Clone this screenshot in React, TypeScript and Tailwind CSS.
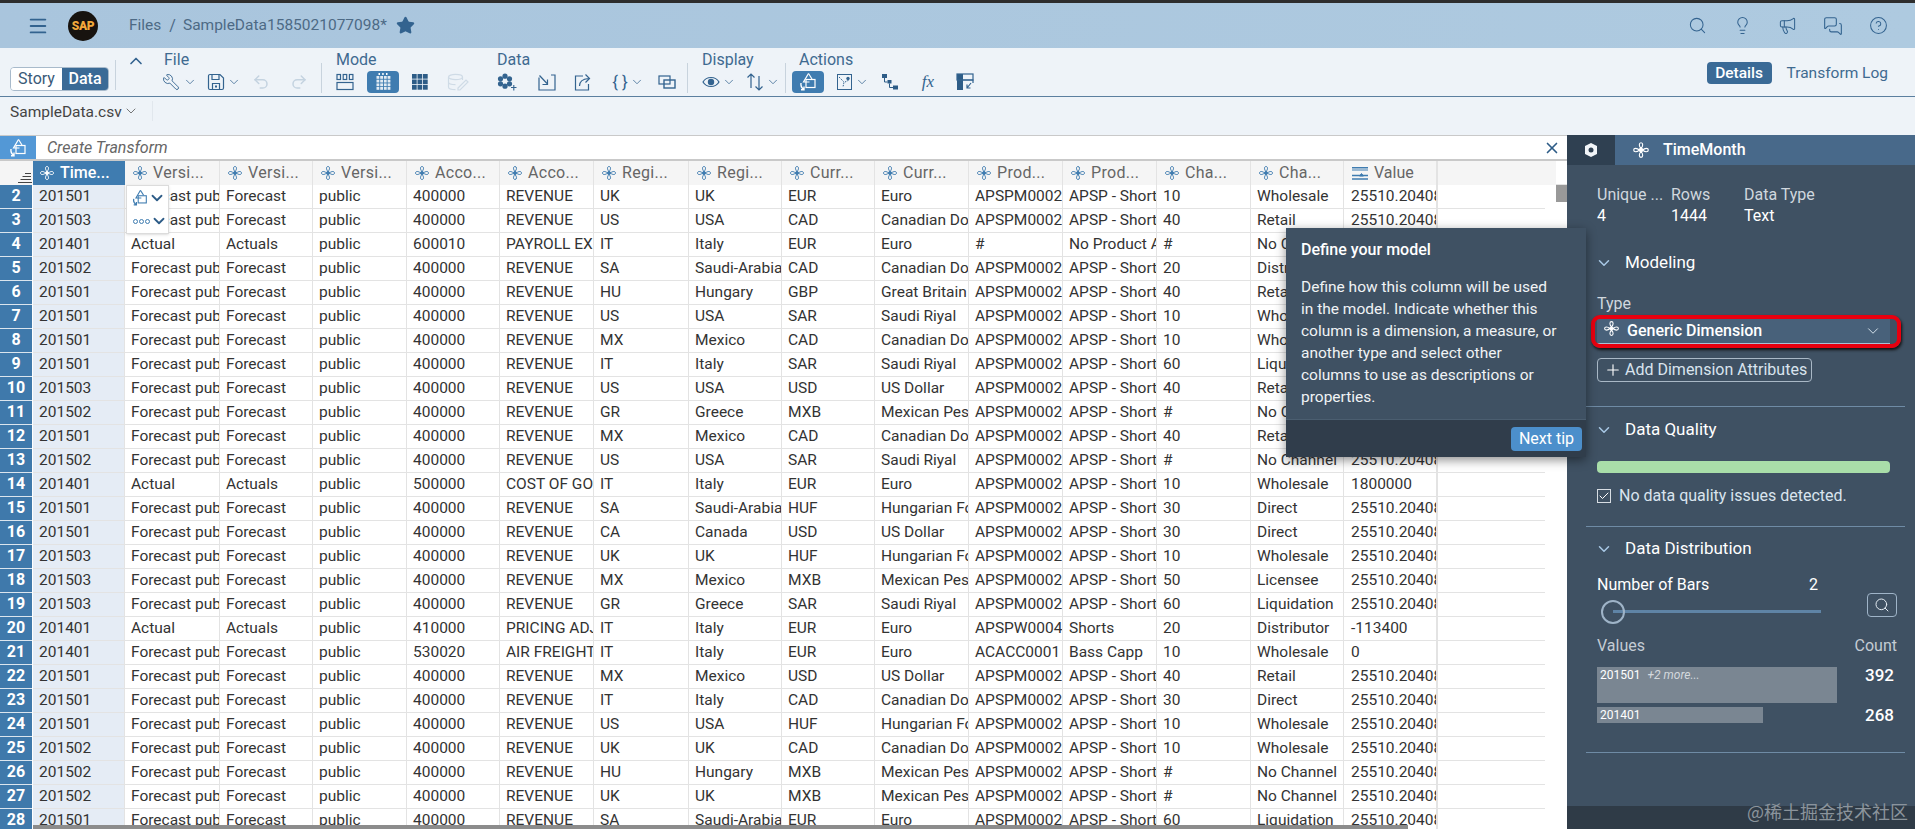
import React from 'react';
import {
  Check,
  ChevronDown,
  ChevronUp,
  CircleHelp,
  Lightbulb,
  Megaphone,
  Menu,
  MessagesSquare,
  Plus,
  Redo2,
  Search,
  Star,
  Undo2,
  Wrench,
  X,
} from 'lucide-react';

const rowGrid =
  'grid grid-cols-[32px_1px_92px_95px_93px_94px_93px_94px_95px_93px_93px_94px_94px_94px_94px_93px_94px_118px]';

const DimIcon = ({ className = '' }: { className?: string }) => (
  <svg viewBox="0 0 16 16" fill="none" stroke="currentColor" strokeWidth="1" className={className}>
    <circle cx="8" cy="8" r="1.5" fill="currentColor" />
    <path d="M8 6.5C6 4.5 6 1.5 8 1.5s2 3 0 5z" />
    <path d="M8 9.5c-2 2-2 5 0 5s2-3 0-5z" />
    <path d="M6.5 8C4.5 6 1.5 6 1.5 8s3 2 5 0z" />
    <path d="M9.500 8c2-2 5-2 5 0s-3 2-5 0z" />
  </svg>
);

const MeasureIcon = ({ className = '' }: { className?: string }) => (
  <svg viewBox="0 0 18 16" fill="none" stroke="currentColor" strokeWidth="1" className={className}>
    <path d="M1 2.500h16M2 3v3M4 3v3M6 3v3M8 3v3M10 3v3M12 3v3M14 3v3M16 3v3" />
    <path d="M1 10.500h16M1 14h16" strokeWidth="1.300" />
    <path d="M10.500 8.500l2 2.500h-4z" fill="currentColor" />
  </svg>
);

const TransformIcon = ({ className = '' }: { className?: string }) => (
  <svg viewBox="0 0 20 20" fill="none" stroke="currentColor" strokeWidth="1.200" className={className}>
    <path d="M10.500 1.500L5.500 10h6" />
    <path d="M10.500 1.500l3.500 5.500" />
    <rect x="8" y="7.500" width="9" height="8" />
    <path d="M3 11c-.5 3 .5 5 3 6.500M6 14.500v3.200H3" strokeWidth="1.400" />
  </svg>
);

const ModeSchema = () => (
  <svg viewBox="0 0 18 18" className="w-[18px] h-[18px]" fill="none" stroke="#33638f" strokeWidth="1.200">
    <rect x="1" y="1.500" width="3.500" height="5" />
    <rect x="7.200" y="1.500" width="3.500" height="5" />
    <rect x="13.400" y="1.500" width="3.500" height="5" />
    <rect x="1" y="9.500" width="16" height="7" />
  </svg>
);

const ModeTable = () => (
  <svg viewBox="0 0 18 18" className="w-[18px] h-[18px]" fill="#fff">
    <path d="M4.500 0h1.500v2h-1.500zM8.200 0h1.500v2h-1.500zM12 0h1.500v2h-1.500z" />
    {[3, 6.700, 10.400, 14].map((y) =>
      [2.500, 6.200, 9.900, 13.600].map((x) => <rect key={`${x}-${y}`} x={x} y={y} width="2.800" height="2.800" opacity="0.85" />),
    )}
  </svg>
);

const ModeGrid = () => (
  <svg viewBox="0 0 18 18" className="w-[18px] h-[18px]" fill="#2d5c87">
    {[1, 6.500, 12].map((y) =>
      [1, 6.500, 12].map((x) => <rect key={`${x}-${y}`} x={x} y={y} width="4.700" height="4.700" />),
    )}
  </svg>
);

const ModeEdit = () => (
  <svg viewBox="0 0 22 18" className="w-[22px] h-[18px]" fill="none" stroke="#cfdbe6" strokeWidth="1.200">
    <ellipse cx="8.500" cy="4" rx="7" ry="2.700" />
    <path d="M1.500 4v10c0 1.500 3 2.700 7 2.700M15.500 4v3M1.500 9c0 1.500 3 2.700 7 2.700" />
    <path d="M11 15l8-8 2 2-8 8h-2z" />
  </svg>
);

const SaveIcon = () => (
  <svg viewBox="0 0 18 18" className="w-[18px] h-[18px]" fill="none" stroke="#33638f" strokeWidth="1.200">
    <path d="M3 1.500h10l3.500 3.500v10a1.500 1.500 0 0 1-1.500 1.500H3A1.500 1.500 0 0 1 1.500 15V3A1.500 1.500 0 0 1 3 1.500z" />
    <path d="M5 1.500v5h7v-5M5.500 16.500v-6h7v6" />
    <rect x="8" y="12.500" width="2" height="2" fill="#33638f" stroke="none" />
  </svg>
);

const AddDimIcon = () => (
  <svg viewBox="0 0 20 18" className="w-5 h-[18px]" fill="#33638f">
    <circle cx="8" cy="3.200" r="2.600" />
    <circle cx="8" cy="13.200" r="2.600" />
    <circle cx="3.500" cy="5.800" r="2.600" />
    <circle cx="12.500" cy="5.800" r="2.600" />
    <circle cx="3.500" cy="10.800" r="2.600" />
    <circle cx="12.500" cy="10.800" r="2.600" />
    <circle cx="8" cy="8.200" r="2" fill="#eef3f8" />
    <path d="M14 14.500h5.500M16.800 12v5.500" stroke="#33638f" strokeWidth="1.100" fill="none" />
  </svg>
);

const ImportIcon = () => (
  <svg viewBox="0 0 18 18" className="w-[18px] h-[18px]" fill="none" stroke="#33638f" strokeWidth="1.200">
    <path d="M1 4.500v12.500h16V2h-4" />
    <path d="M1.500 1.500l7.500 8M4.500 10.500h5v-5" transform="translate(0 1)" />
  </svg>
);

const ExportIcon = () => (
  <svg viewBox="0 0 18 18" className="w-[18px] h-[18px]" fill="none" stroke="#33638f" strokeWidth="1.200">
    <path d="M9 3H1.500v14h13V11" />
    <path d="M5.500 13c0-4.500 3-7 9-7.500M11.500 1.500l4 4-4 4" />
  </svg>
);

const CopyIcon = () => (
  <svg viewBox="0 0 18 18" className="w-[18px] h-[18px]" fill="none" stroke="#33638f" strokeWidth="1.200">
    <rect x="1" y="3" width="11" height="8" />
    <rect x="6" y="7" width="11" height="8" strokeWidth="1.400" />
  </svg>
);

const EyeIcon = () => (
  <svg viewBox="0 0 18 14" className="w-[18px] h-[14px]" fill="none" stroke="#33638f" strokeWidth="1.200">
    <path d="M1 7c3.500-6 12.500-6 16 0-3.500 6-12.500 6-16 0z" />
    <circle cx="9" cy="7" r="3.200" fill="#33638f" stroke="none" />
  </svg>
);

const SortIcon = () => (
  <svg viewBox="0 0 18 20" className="w-[18px] h-5" fill="none" stroke="#33638f" strokeWidth="1.200">
    <path d="M5 16V2M1.500 5.500L5 2l3.500 3.500" />
    <path d="M13 4v14M9.500 14.500L13 18l3.500-3.500" />
  </svg>
);

const MapIcon = () => (
  <svg viewBox="0 0 18 18" className="w-[18px] h-[18px]" fill="none" stroke="#33638f" strokeWidth="1">
    <rect x="1.500" y="1.500" width="14" height="15" />
    <path d="M3 4l5 5-1 5M9 9l4-2" strokeDasharray="1.500 1" />
    <circle cx="12" cy="5.500" r="1.700" fill="#33638f" stroke="none" />
  </svg>
);

const HierarchyIcon = () => (
  <svg viewBox="0 0 18 18" className="w-[18px] h-[18px]" fill="#2d5c87">
    <rect x="1" y="1" width="5" height="4" />
    <rect x="6.500" y="7" width="4" height="3.500" />
    <rect x="12" y="12.500" width="5" height="4" />
    <path d="M3.500 5v4h3M8.500 10.500v4h3.500" fill="none" stroke="#2d5c87" />
  </svg>
);

const LayoutIcon = () => (
  <svg viewBox="0 0 18 18" className="w-[18px] h-[18px]" fill="none" stroke="#33638f" strokeWidth="1.200">
    <rect x="1" y="1" width="6" height="16" fill="#2d5c87" stroke="none" />
    <rect x="1" y="1" width="16" height="6" />
    <path d="M7 7h10v3" />
    <path d="M15 10l-4 5M11 11.500V15h3.500" />
  </svg>
);

const HeaderSortIcon = () => (
  <svg viewBox="0 0 14 10" className="w-3.5 h-2.5" fill="none" stroke="#444" strokeWidth="1">
    <path d="M7 .500h6M4.500 3.500h8.500M2.500 6.500h10.500M0 9.500h14" />
  </svg>
);

const ActionIcon = ({ children, active }: { children: React.ReactNode; active?: boolean }) => (
  <div
    className={
      active
        ? 'w-8 h-[22px] rounded-sm bg-[#3f7cb0] flex items-center justify-center'
        : 'h-[22px] flex items-center justify-center'
    }
  >
    {children}
  </div>
);

const SmallChevron = ({ className = '' }: { className?: string }) => (
  <ChevronDown className={`w-3.5 h-3.5 text-[#33638f] ${className}`} strokeWidth={1.300} />
);

const ToolLabel = ({ children, className = '' }: { children: React.ReactNode; className?: string }) => (
  <div className={`text-[16px] leading-[20px] text-[#3f6a90] ${className}`}>{children}</div>
);

const Separator = ({ className = '' }: { className?: string }) => (
  <div className={`w-px h-[30px] bg-[#c8d3dd] self-end mb-[3px] ${className}`} />
);

const Toolbar = () => (
  <div className="h-[49px] shrink-0 flex bg-[#eef3f8] border-b border-[#5b7f9f] pl-[10px] pr-[27px]">
    <div className="flex h-6 mt-[19px] w-[99px] rounded-sm overflow-hidden border border-[#a8bacb] text-[16px] leading-[22px]">
      <div className="w-[51px] bg-white text-center text-[#3a5a78]">Story</div>
      <div className="flex-1 bg-[#3a6a96] text-center text-white font-medium">Data</div>
    </div>
    <Separator className="ml-[6px] mb-[6px]" />
    <ChevronUp className="w-5 h-5 text-[#33638f] ml-[10px] mt-[3px]" strokeWidth={2} />
    <div className="ml-[18px] mt-[2px] w-[157px]">
      <ToolLabel>File</ToolLabel>
      <div className="flex items-center mt-[1px] -ml-[2px]">
        <ActionIcon>
          <Wrench className="w-[18px] h-[18px] text-[#33638f] -scale-x-100" strokeWidth={1.200} />
        </ActionIcon>
        <SmallChevron className="ml-[3px]" />
        <div className="ml-[10px]">
          <ActionIcon>
            <SaveIcon />
          </ActionIcon>
        </div>
        <SmallChevron className="ml-[2px]" />
        <Undo2 className="w-[18px] h-[18px] text-[#c4d3e0] ml-[11px]" strokeWidth={2} />
        <Redo2 className="w-[18px] h-[18px] text-[#c4d3e0] ml-[20px]" strokeWidth={2} />
      </div>
    </div>
    <Separator />
    <div className="ml-[14px] mt-[2px] w-[161px]">
      <ToolLabel>Mode</ToolLabel>
      <div className="flex items-center mt-[1px]">
        <ModeSchema />
        <div className="ml-[13px]">
          <ActionIcon active>
            <ModeTable />
          </ActionIcon>
        </div>
        <div className="ml-[12px]">
          <ModeGrid />
        </div>
        <div className="ml-[18px]">
          <ModeEdit />
        </div>
      </div>
    </div>
    <div className="mt-[2px] w-[190px]">
      <ToolLabel>Data</ToolLabel>
      <div className="flex items-center mt-[1px]">
        <ActionIcon>
          <AddDimIcon />
        </ActionIcon>
        <div className="ml-[21px]">
          <ImportIcon />
        </div>
        <div className="ml-[18px]">
          <ExportIcon />
        </div>
        <span className="ml-[18px] w-5 text-center text-[17px] leading-[20px] text-[#33638f]">{'{ }'}</span>
        <SmallChevron />
        <div className="ml-[14px]">
          <CopyIcon />
        </div>
      </div>
    </div>
    <Separator />
    <div className="ml-[14px] mt-[2px] w-[83px]">
      <ToolLabel>Display</ToolLabel>
      <div className="flex items-center mt-[1px]">
        <ActionIcon>
          <EyeIcon />
        </ActionIcon>
        <SmallChevron className="ml-[2px]" />
        <div className="ml-[10px]">
          <ActionIcon>
            <SortIcon />
          </ActionIcon>
        </div>
        <SmallChevron className="ml-[2px]" />
      </div>
    </div>
    <Separator />
    <div className="ml-[6px] mt-[2px]">
      <ToolLabel className="ml-[7px]">Actions</ToolLabel>
      <div className="flex items-center mt-[1px]">
        <ActionIcon active>
          <TransformIcon className="w-5 h-5 text-white" />
        </ActionIcon>
        <div className="ml-[12px]">
          <MapIcon />
        </div>
        <SmallChevron className="ml-[1px]" />
        <div className="ml-[12px]">
          <HierarchyIcon />
        </div>
        <span className="ml-[20px] w-[18px] text-center italic text-[17px] leading-[20px] text-[#33638f] font-['Liberation_Serif',serif]">
          fx
        </span>
        <div className="ml-[19px]">
          <LayoutIcon />
        </div>
      </div>
    </div>
    <div className="flex-1" />
    <div className="flex items-center gap-[15px] h-[23px] mt-[13px] text-[15.500px]">
      <div className="w-[65px] text-center h-[22px] rounded-sm bg-[#3a6a96] text-white font-medium leading-[22px]">Details</div>
      <div className="text-[#3f6a90] leading-[22px] whitespace-nowrap">Transform Log</div>
    </div>
  </div>
);

type Row = [string, string, string, string, string, string, string, string, string, string, string, string, string, string, string, string];

const fc = 'Forecast public';
const ap = 'APSPM0002';
const as = 'APSP - Shorts';
const v = '25510.2040816';

const rows: Row[] = [
  ['2', '201501', fc, 'Forecast', 'public', '400000', 'REVENUE', 'UK', 'UK', 'EUR', 'Euro', ap, as, '10', 'Wholesale', v],
  ['3', '201503', fc, 'Forecast', 'public', '400000', 'REVENUE', 'US', 'USA', 'CAD', 'Canadian Dollar', ap, as, '40', 'Retail', v],
  ['4', '201401', 'Actual', 'Actuals', 'public', '600010', 'PAYROLL EXPENSE', 'IT', 'Italy', 'EUR', 'Euro', '#', 'No Product Assigned', '#', 'No Channel', v],
  ['5', '201502', fc, 'Forecast', 'public', '400000', 'REVENUE', 'SA', 'Saudi-Arabia', 'CAD', 'Canadian Dollar', ap, as, '20', 'Distributor', v],
  ['6', '201501', fc, 'Forecast', 'public', '400000', 'REVENUE', 'HU', 'Hungary', 'GBP', 'Great Britain Pound', ap, as, '40', 'Retail', v],
  ['7', '201501', fc, 'Forecast', 'public', '400000', 'REVENUE', 'US', 'USA', 'SAR', 'Saudi Riyal', ap, as, '10', 'Wholesale', v],
  ['8', '201501', fc, 'Forecast', 'public', '400000', 'REVENUE', 'MX', 'Mexico', 'CAD', 'Canadian Dollar', ap, as, '10', 'Wholesale', v],
  ['9', '201501', fc, 'Forecast', 'public', '400000', 'REVENUE', 'IT', 'Italy', 'SAR', 'Saudi Riyal', ap, as, '60', 'Liquidation', v],
  ['10', '201503', fc, 'Forecast', 'public', '400000', 'REVENUE', 'US', 'USA', 'USD', 'US Dollar', ap, as, '40', 'Retail', v],
  ['11', '201502', fc, 'Forecast', 'public', '400000', 'REVENUE', 'GR', 'Greece', 'MXB', 'Mexican Peso', ap, as, '#', 'No Channel', v],
  ['12', '201501', fc, 'Forecast', 'public', '400000', 'REVENUE', 'MX', 'Mexico', 'CAD', 'Canadian Dollar', ap, as, '40', 'Retail', v],
  ['13', '201502', fc, 'Forecast', 'public', '400000', 'REVENUE', 'US', 'USA', 'SAR', 'Saudi Riyal', ap, as, '#', 'No Channel', v],
  ['14', '201401', 'Actual', 'Actuals', 'public', '500000', 'COST OF GOODS', 'IT', 'Italy', 'EUR', 'Euro', ap, as, '10', 'Wholesale', '1800000'],
  ['15', '201501', fc, 'Forecast', 'public', '400000', 'REVENUE', 'SA', 'Saudi-Arabia', 'HUF', 'Hungarian Forint', ap, as, '30', 'Direct', v],
  ['16', '201501', fc, 'Forecast', 'public', '400000', 'REVENUE', 'CA', 'Canada', 'USD', 'US Dollar', ap, as, '30', 'Direct', v],
  ['17', '201503', fc, 'Forecast', 'public', '400000', 'REVENUE', 'UK', 'UK', 'HUF', 'Hungarian Forint', ap, as, '10', 'Wholesale', v],
  ['18', '201503', fc, 'Forecast', 'public', '400000', 'REVENUE', 'MX', 'Mexico', 'MXB', 'Mexican Peso', ap, as, '50', 'Licensee', v],
  ['19', '201503', fc, 'Forecast', 'public', '400000', 'REVENUE', 'GR', 'Greece', 'SAR', 'Saudi Riyal', ap, as, '60', 'Liquidation', v],
  ['20', '201401', 'Actual', 'Actuals', 'public', '410000', 'PRICING ADJ', 'IT', 'Italy', 'EUR', 'Euro', 'APSPW0004', 'Shorts', '20', 'Distributor', '-113400'],
  ['21', '201401', fc, 'Forecast', 'public', '530020', 'AIR FREIGHT', 'IT', 'Italy', 'EUR', 'Euro', 'ACACC0001', 'Bass Capp', '10', 'Wholesale', '0'],
  ['22', '201501', fc, 'Forecast', 'public', '400000', 'REVENUE', 'MX', 'Mexico', 'USD', 'US Dollar', ap, as, '40', 'Retail', v],
  ['23', '201501', fc, 'Forecast', 'public', '400000', 'REVENUE', 'IT', 'Italy', 'CAD', 'Canadian Dollar', ap, as, '30', 'Direct', v],
  ['24', '201501', fc, 'Forecast', 'public', '400000', 'REVENUE', 'US', 'USA', 'HUF', 'Hungarian Forint', ap, as, '10', 'Wholesale', v],
  ['25', '201502', fc, 'Forecast', 'public', '400000', 'REVENUE', 'UK', 'UK', 'CAD', 'Canadian Dollar', ap, as, '10', 'Wholesale', v],
  ['26', '201502', fc, 'Forecast', 'public', '400000', 'REVENUE', 'HU', 'Hungary', 'MXB', 'Mexican Peso', ap, as, '#', 'No Channel', v],
  ['27', '201502', fc, 'Forecast', 'public', '400000', 'REVENUE', 'UK', 'UK', 'MXB', 'Mexican Peso', ap, as, '#', 'No Channel', v],
  ['28', '201501', fc, 'Forecast', 'public', '400000', 'REVENUE', 'SA', 'Saudi-Arabia', 'EUR', 'Euro', ap, as, '60', 'Liquidation', v],
];

const headers = ['Versi...', 'Versi...', 'Versi...', 'Acco...', 'Acco...', 'Regi...', 'Regi...', 'Curr...', 'Curr...', 'Prod...', 'Prod...', 'Cha...', 'Cha...'];

const HeaderCell = ({ label }: { label: string }) => (
  <div className="flex items-center gap-[5px] pl-[7px] bg-[#f5f5f5] border-r border-[#e3e3e3] overflow-hidden text-[#666] text-[16px]">
    <DimIcon className="w-4 h-4 shrink-0 text-[#3f7cb0]" />
    <span className="whitespace-nowrap tracking-[0.3px]">{label}</span>
  </div>
);

const DataTable = () => (
  <div className="relative w-[1567px] shrink-0 flex flex-col overflow-hidden bg-white">
    <div className="h-[25px] shrink-0 flex items-center bg-white border-b-2 border-[#c9c9c9]">
      <div className="w-9 h-full bg-[#5398d6] flex items-center justify-center">
        <TransformIcon className="w-5 h-5 text-white" />
      </div>
      <div className="pl-[11px] flex-1 italic text-[16px] text-[#666]">Create Transform</div>
      <X className="w-[18px] h-[18px] text-[#2d5c87] mr-[6px]" strokeWidth={2.200} />
    </div>
    <div className={`${rowGrid} h-6 shrink-0 border-b border-[#e3e3e3]`}>
      <div className="bg-[#f5f5f5] flex items-end justify-end pb-[2px]">
        <HeaderSortIcon />
      </div>
      <div className="bg-[#f5f5f5]" />
      <div className="flex items-center gap-[5px] pl-[6px] bg-[#3f7cb0] text-white font-medium text-[16px] overflow-hidden">
        <DimIcon className="w-4 h-4 shrink-0" />
        <span className="whitespace-nowrap">Time...</span>
      </div>
      {headers.map((h, i) => (
        <HeaderCell key={i} label={h} />
      ))}
      <div className="flex items-center gap-[5px] pl-[7px] bg-[#f5f5f5] border-r-2 border-[#e3e3e3] text-[#666] text-[16px]">
        <MeasureIcon className="w-[18px] h-4 shrink-0 text-[#3f7cb0]" />
        <span>Value</span>
      </div>
      <div className="bg-[#f5f5f5]" />
    </div>
    <div className="flex-1 overflow-hidden">
      {rows.map((r) => (
        <div key={r[0]} className={`${rowGrid} h-6`}>
          <div className="bg-[#3f79ab] text-white font-bold text-[16px] text-center leading-[22px] border-b border-[#dbe5ee]">{r[0]}</div>
          <div />
          {r.slice(1).map((c, i) => (
            <div
              key={i}
              className={
                i === 0
                  ? 'bg-[#e5ecf5] border-r border-b border-[#e3e3e3] pl-[6px] overflow-hidden whitespace-nowrap text-[15.500px] leading-[22px] text-[#333]'
                  : i === 14
                    ? 'border-r-2 border-b border-[#e3e3e3] pl-[7px] overflow-hidden whitespace-nowrap text-[15.500px] leading-[22px] text-[#333]'
                    : 'border-r border-b border-[#e3e3e3] pl-[6px] overflow-hidden whitespace-nowrap text-[15.500px] leading-[22px] text-[#333]'
              }
            >
              {c}
            </div>
          ))}
          <div className="w-[107px] border-b border-[#e3e3e3]" />
        </div>
      ))}
    </div>
    <div className="absolute right-0 top-[49px] w-[11px] h-[17px] bg-[#999]" />
    <div className="absolute left-[33px] bottom-0 w-[1375px] h-1 bg-[#8c8c8c]" />
    <div className="absolute left-[126px] top-[49px] w-[43px] h-[49px] bg-white border border-[#dcdcdc] shadow-sm flex flex-col">
      <div className="h-6 flex items-center pl-[4px]">
        <TransformIcon className="w-[18px] h-[18px] text-[#3f7cb0]" />
        <ChevronDown className="w-[18px] h-[18px] text-[#2d5c87] -ml-px" strokeWidth={2.400} />
      </div>
      <div className="h-6 flex items-center pl-[6px]">
        <div className="flex gap-px">
          <span className="w-[5px] h-[5px] rounded-full border border-[#3f7cb0]" />
          <span className="w-[5px] h-[5px] rounded-full border border-[#3f7cb0]" />
          <span className="w-[5px] h-[5px] rounded-full border border-[#3f7cb0]" />
        </div>
        <ChevronDown className="w-[18px] h-[18px] text-[#2d5c87]" strokeWidth={2.400} />
      </div>
    </div>
  </div>
);

const SectionHeader = ({ label }: { label: string }) => (
  <div className="flex items-center h-6 pl-[10px] text-[17px] text-white">
    <ChevronDown className="w-[18px] h-[18px] text-[#a9c9e6] -ml-[1px]" strokeWidth={2} />
    <span className="ml-[12px]">{label}</span>
  </div>
);

const SidePanel = () => (
  <div className="flex-1 bg-[#3f5163] flex flex-col text-white -mt-[1px] overflow-hidden">
    <div className="h-[30px] shrink-0 flex bg-[#48698a]">
      <div className="w-12 bg-[#2f4051] flex items-center justify-center">
        <svg viewBox="0 0 16 16" className="w-4 h-4" fill="#f2f5f8">
          <path d="M8 1l6 3v8l-6 3-6-3V4z" />
          <circle cx="8" cy="8" r="2.500" fill="#2f4051" />
        </svg>
      </div>
      <div className="flex items-center pl-[17px] text-[16px] font-medium">
        <DimIcon className="w-[18px] h-[18px] text-white" />
        <span className="ml-[13px]">TimeMonth</span>
      </div>
    </div>
    <div className="flex-1 flex flex-col pl-[30px] pr-[18px]">
      <div className="grid grid-cols-[74px_73px_1fr] mt-[19px] text-[16px] leading-[21px]">
        <span className="text-[#d0d7de] whitespace-nowrap">Unique ...</span>
        <span className="text-[#d0d7de]">Rows</span>
        <span className="text-[#d0d7de]">Data Type</span>
        <span>4</span>
        <span>1444</span>
        <span>Text</span>
      </div>
      <div className="mt-[25px] -ml-[11px]">
        <SectionHeader label="Modeling" />
      </div>
      <div className="mt-[19px] text-[16px] leading-[20px] text-[#d0d7de]">Type</div>
      <div className="relative mt-[5px] h-[25px] w-[293px] bg-[#48617a] border-b border-[#a9c0d6] flex items-center pl-[6px] pr-[8px] text-[16px] font-medium">
        <div className="absolute -left-[6px] -right-[11px] -top-[4px] -bottom-[5px] rounded-[9px] border-4 border-[#e8000f] shadow-[1px_2px_3px_#111]" />
        <DimIcon className="w-[17px] h-[17px] text-white -mt-[5px]" />
        <span className="ml-[7px]">Generic Dimension</span>
        <ChevronDown className="w-[18px] h-[18px] ml-auto text-[#d7e2ec]" strokeWidth={1.300} />
      </div>
      <div className="mt-[14px] h-6 w-[215px] flex items-center border border-[#a9b8c6] rounded-sm text-[16px] text-[#d9e4ee]">
        <Plus className="w-[18px] h-[18px] ml-[6px] text-white" strokeWidth={1.500} />
        <span className="ml-[3px] whitespace-nowrap">Add Dimension Attributes</span>
      </div>
      <div className="h-px bg-[#6f8ba5] -ml-[11px] -mr-[8px] mt-[24px]" />
      <div className="mt-[11px] -ml-[11px]">
        <SectionHeader label="Data Quality" />
      </div>
      <div className="mt-[19px] h-3 w-[293px] bg-[#a9dea9] rounded-sm" />
      <div className="mt-[13px] flex items-center text-[16px] text-[#d9e4ee] h-5">
        <div className="w-[14px] h-[14px] border border-[#d7dde3] flex items-center justify-center">
          <Check className="w-3 h-3 text-white" strokeWidth={2} />
        </div>
        <span className="ml-2 whitespace-nowrap">No data quality issues detected.</span>
      </div>
      <div className="h-px bg-[#6f8ba5] -ml-[11px] -mr-[8px] mt-[20px]" />
      <div className="mt-[10px] -ml-[11px]">
        <SectionHeader label="Data Distribution" />
      </div>
      <div className="mt-[14px] w-[221px] flex justify-between text-[16px] leading-[20px]">
        <span>Number of Bars</span>
        <span>2</span>
      </div>
      <div className="flex items-start">
        <div className="relative w-[224px] h-[26px] mt-[4px]">
          <div className="absolute left-[16px] right-0 top-[11px] h-[3px] bg-[#5f84a6]" />
          <div className="absolute left-[4px] top-[1px] w-6 h-6 rounded-full border-2 border-[#9fb4c8]" />
        </div>
        <div className="ml-[46px] mt-[-2px] w-[30px] h-6 border border-[#9fb4c8] rounded-sm flex items-center justify-center">
          <Search className="w-4 h-4 text-[#e4ecf3]" strokeWidth={1.500} />
        </div>
      </div>
      <div className="flex justify-between w-[300px] mt-[11px] text-[16px] leading-[20px] text-[#c4ccd4]">
        <span>Values</span>
        <span>Count</span>
      </div>
      <div className="flex w-[300px] mt-[11px]">
        <div className="w-[240px] h-9 bg-[#7a8692] pl-[3px] text-[12px] leading-[17px] whitespace-nowrap">
          201501 <i className="ml-1 text-[#d3d8dd]">+2 more...</i>
        </div>
        <div className="flex-1 text-right pr-[3px] text-[17px] font-medium leading-[17px]">392</div>
      </div>
      <div className="flex w-[300px] mt-[4px]">
        <div className="w-[166px] h-4 bg-[#7a8692] pl-[3px] text-[12px] leading-[17px]">201401</div>
        <div className="flex-1 text-right pr-[3px] text-[17px] font-medium leading-[17px]">268</div>
      </div>
      <div className="h-px bg-[#6f8ba5] -ml-[11px] -mr-[8px] mt-[28px]" />
    </div>
    <div className="relative h-[23px] shrink-0 bg-[#2f3b47]">
      <span className="absolute right-[7px] -top-[8px] text-[18px] leading-[26px] text-[#8b949c] font-['Noto_Sans_CJK_SC',sans-serif] whitespace-nowrap">
        @稀土掘金技术社区
      </span>
    </div>
  </div>
);

const TipPopover = () => (
  <div className="absolute left-[1286px] top-[228px] w-[300px] h-[229px] flex flex-col bg-[#3f5163] text-white shadow-[0_3px_10px_rgba(0,0,0,0.45)]">
    <div className="flex-1 px-[15px] pt-[11px]">
      <div className="text-[16px] leading-[22px] font-medium">Define your model</div>
      <p className="mt-[15px] text-[15.500px] leading-[22px] text-[#f0f3f5] whitespace-nowrap">
        Define how this column will be used
        <br />
        in the model. Indicate whether this
        <br />
        column is a dimension, a measure, or
        <br />
        another type and select other
        <br />
        columns to use as descriptions or
        <br />
        properties.
      </p>
    </div>
    <div className="h-[38px] bg-[#303d4b] border-t border-[#4b5e70] flex items-center justify-end pr-[4px]">
      <div className="w-[71px] h-6 rounded-sm bg-[#4c8fcb] text-center text-[16px] leading-[23px]">Next tip</div>
    </div>
  </div>
);

const App = () => {
  return (
    <div className="relative w-[1915px] h-[829px] overflow-hidden flex flex-col font-['Roboto',sans-serif] text-[16px]">
      <div className="h-[3px] shrink-0 bg-[#2d2d2d]" />
      <div className="h-[45px] shrink-0 flex items-center bg-gradient-to-r from-[#a9c5dd] to-[#aecae0] text-[#4d6a85] pr-[27px]">
        <Menu className="w-[22px] h-[22px] text-[#33638f] ml-[27px]" strokeWidth={2} />
        <div className="ml-[19px] w-[30px] h-[30px] rounded-[50%] bg-[#17130f] flex items-center justify-center text-[12px] font-black text-[#f2a93b] tracking-tight">
          SAP
        </div>
        <span className="ml-[31px] text-[15.500px]">Files</span>
        <span className="ml-[8px]">/</span>
        <span className="ml-[7px] text-[15.500px] whitespace-nowrap">SampleData1585021077098*</span>
        <Star className="w-[19px] h-[19px] ml-[9px] text-[#33638f] fill-[#33638f]" />
        <div className="flex-1" />
        <div className="flex items-center gap-[26px] text-[#33638f]">
          <Search className="w-[19px] h-[19px]" strokeWidth={1.300} />
          <Lightbulb className="w-[19px] h-[19px]" strokeWidth={1.300} />
          <Megaphone className="w-[19px] h-[19px]" strokeWidth={1.300} />
          <MessagesSquare className="w-[20px] h-[20px]" strokeWidth={1.300} />
          <CircleHelp className="w-[19px] h-[19px]" strokeWidth={1.300} />
        </div>
      </div>
      <Toolbar />
      <div className="h-[40px] shrink-0 flex items-start pt-[4px] bg-[#eef3f8] border-b-2 border-[#c9c9c9] pl-[10px] box-border -mb-[1px]">
        <span className="text-[15.500px] leading-[22px] text-[#444]">SampleData.csv</span>
        <ChevronDown className="w-4 h-4 ml-[1px] mt-[2px] text-[#555]" strokeWidth={1.200} />
        <div className="ml-[13px] w-px h-5 bg-[#e1e7ed]" />
      </div>
      <div className="flex-1 flex min-h-0">
        <DataTable />
        <SidePanel />
      </div>
      <TipPopover />
    </div>
  );
};

export default App;
